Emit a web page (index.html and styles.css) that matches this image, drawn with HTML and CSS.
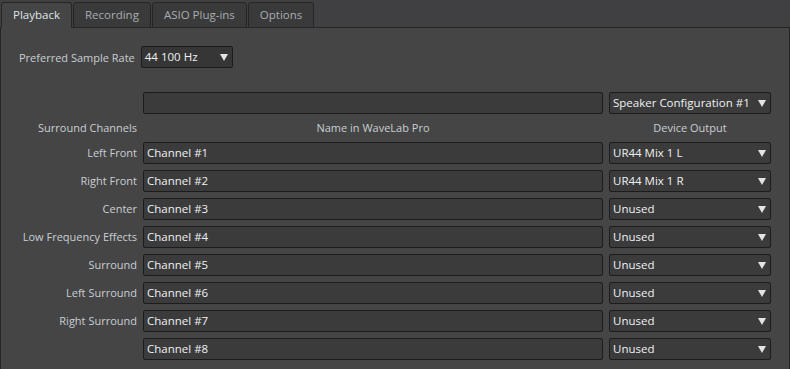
FILE: index.html
```html
<!DOCTYPE html>
<html>
<head>
<meta charset="utf-8">
<link rel="stylesheet" href="styles.css">
</head>
<body>
<div class="tabs">
  <div class="tab active">Playback</div>
  <div class="tab">Recording</div>
  <div class="tab">ASIO Plug-ins</div>
  <div class="tab">Options</div>
</div>
<div class="panel">
  <div class="rate-row">
    <span class="label">Preferred Sample Rate</span>
    <div class="select rate">44 100 Hz<span class="arrow"></span></div>
  </div>
  <div class="grid">
    <div></div>
    <div class="input"></div>
    <div class="select">Speaker Configuration #1<span class="arrow"></span></div>

    <div class="label head-left">Surround Channels</div>
    <div class="label head">Name in WaveLab Pro</div>
    <div class="label head">Device Output</div>

    <div class="label">Left Front</div>
    <div class="input">Channel #1</div>
    <div class="select">UR44 Mix 1 L<span class="arrow"></span></div>

    <div class="label">Right Front</div>
    <div class="input">Channel #2</div>
    <div class="select">UR44 Mix 1 R<span class="arrow"></span></div>

    <div class="label">Center</div>
    <div class="input">Channel #3</div>
    <div class="select">Unused<span class="arrow"></span></div>

    <div class="label">Low Frequency Effects</div>
    <div class="input">Channel #4</div>
    <div class="select">Unused<span class="arrow"></span></div>

    <div class="label">Surround</div>
    <div class="input">Channel #5</div>
    <div class="select">Unused<span class="arrow"></span></div>

    <div class="label">Left Surround</div>
    <div class="input">Channel #6</div>
    <div class="select">Unused<span class="arrow"></span></div>

    <div class="label">Right Surround</div>
    <div class="input">Channel #7</div>
    <div class="select">Unused<span class="arrow"></span></div>

    <div class="label"></div>
    <div class="input">Channel #8</div>
    <div class="select">Unused<span class="arrow"></span></div>
  </div>
</div>
</body>
</html>
```
FILE: styles.css
```css
html, body {
  margin: 0;
  padding: 0;
  background: #404042;
  width: 790px;
  height: 369px;
  overflow: hidden;
  font-family: "Open Sans", "Noto Sans", sans-serif;
  font-size: 11px;
  color: #c9ced4;
}
.tabs {
  display: flex;
  padding: 2px 0 0 1px;
  gap: 1px;
  height: 25px;
  position: relative;
  z-index: 1;
}
.tab {
  box-sizing: border-box;
  height: 26px;
  padding: 0 11px;
  line-height: 24px;
  background: #3a3a3a;
  border: 1px solid #262626;
  border-radius: 3px 3px 0 0;
  color: #a9adb2;
  font-size: 11.5px;
}
.tab.active {
  background: #454545;
  color: #dfe3e8;
  border-bottom-color: #454545;
  padding: 0 11px;
}
.panel {
  box-sizing: border-box;
  height: 342px;
  background: #454545;
  border: 1px solid #262626;
  border-bottom: none;
  padding: 18px 18px 0 18px;
}
.rate-row {
  display: flex;
  align-items: center;
  gap: 6px;
}
.label {
  white-space: nowrap;
}
.select, .input {
  box-sizing: border-box;
  height: 22px;
  line-height: 20px;
  border: 1px solid #1c1c1c;
  border-radius: 2px;
  background: #3b3b3b;
  color: #eef1f4;
  padding: 0 3px;
  position: relative;
  white-space: nowrap;
  font-size: 11.5px;
}
.select.rate {
  width: 92px;
  padding-left: 3px;
  background: #363636;
}
.arrow {
  position: absolute;
  right: 4px;
  top: 7px;
  width: 0;
  height: 0;
  border-left: 4px solid transparent;
  border-right: 4px solid transparent;
  border-top: 7px solid #e4e4e4;
}
.grid {
  display: grid;
  grid-template-columns: 118px 460px 162px;
  grid-template-rows: 22px 16px;
  grid-auto-rows: 22px;
  column-gap: 6px;
  row-gap: 6px;
  margin-top: 24px;
}
.grid > .label {
  text-align: right;
  line-height: 22px;
}
.grid > .label.head-left,
.grid > .label.head {
  line-height: 16px;
}
.grid > .label.head {
  text-align: center;
}
```
